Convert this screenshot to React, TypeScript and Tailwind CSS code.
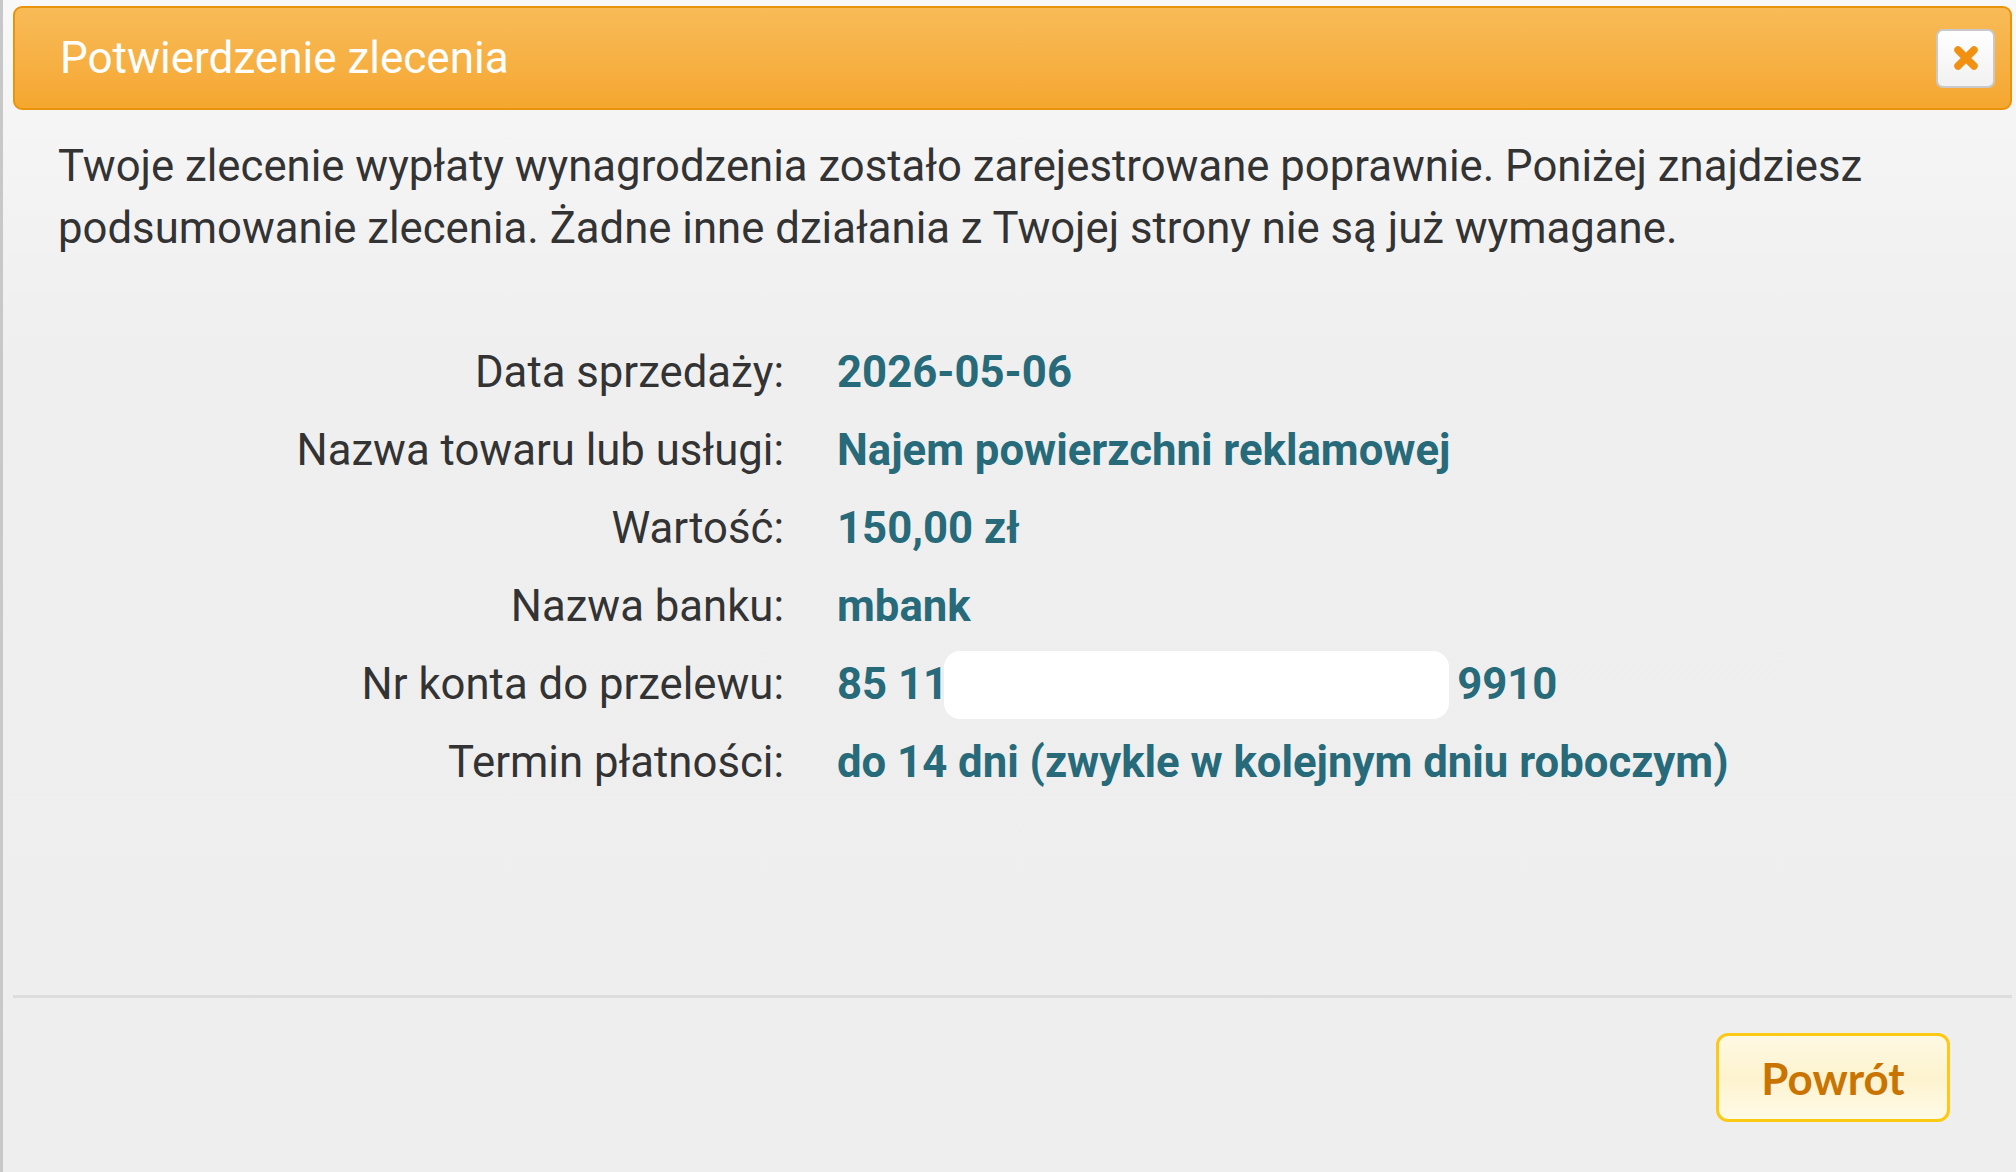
import React from "react";

const rows: [string, string][] = [
  ["Data sprzedaży:", "2026-05-06"],
  ["Nazwa towaru lub usługi:", "Najem powierzchni reklamowej"],
  ["Wartość:", "150,00 zł"],
  ["Nazwa banku:", "mbank"],
  ["Nr konta do przelewu:", "ACCOUNT"],
  ["Termin płatności:", "do 14 dni (zwykle w kolejnym dniu roboczym)"],
];

export default function App() {
  return (
    <div
      className="w-[2016px] h-[1172px] flex flex-col border-l-[3px] border-[#c8c8c8] bg-gradient-to-b from-[#f8f8f8] via-[#efefef] via-30% to-[#eeeeee] overflow-hidden"
      style={{ fontFamily: "Roboto, 'Noto Sans', sans-serif" }}
    >
      <div className="ml-[10px] mr-[4px] mt-[6px] h-[104px] shrink-0 rounded-[9px] border-2 border-[#ea940c] bg-gradient-to-b from-[#f8bb57] to-[#f5a72f] flex items-center justify-between pl-[45px] pr-[15px]">
        <span className="text-white text-[44px] leading-none">Potwierdzenie zlecenia</span>
        <button className="w-[59px] h-[59px] rounded-[7px] border-2 border-[#c9c9c9] bg-gradient-to-b from-[#ffffff] to-[#f1f1f1] flex items-center justify-center">
          <svg width="30" height="30" viewBox="0 0 30 30">
            <path d="M7 7 L23 23 M23 7 L7 23" stroke="#f29111" strokeWidth="7.5" strokeLinecap="round" />
          </svg>
        </button>
      </div>

      <p className="mt-[25px] pl-[55px] pr-[60px] text-[43.7px] leading-[62px] text-[#333333]">
        Twoje zlecenie wypłaty wynagrodzenia zostało zarejestrowane poprawnie. Poniżej znajdziesz podsumowanie zlecenia. Żadne inne działania z Twojej strony nie są już wymagane.
      </p>

      <div className="mt-[75px] flex flex-col">
        {rows.map(([label, value]) => (
          <div key={label} className="h-[78px] flex items-center text-[43.7px]">
            <div className="w-[781px] text-right text-[#333333]">{label}</div>
            <div className="ml-[53px] font-bold text-[#276a7a]">
              {value === "ACCOUNT" ? (
                <span className="flex items-center">
                  <span>85 11</span>
                  <span className="inline-block w-[505px] h-[68px] bg-white rounded-[16px] -ml-[4px] mr-[8px]" />
                  <span>9910</span>
                </span>
              ) : (
                value
              )}
            </div>
          </div>
        ))}
      </div>

      <div className="mt-[193px] ml-[10px] mr-[4px] h-[3px] bg-[#dddddd]" />

      <div className="flex justify-end pr-[66px] mt-[35px]">
        <button className="w-[234px] h-[89px] rounded-[12px] border-[3px] border-[#fcc914] bg-gradient-to-b from-[#fef9e4] via-[#fdf3cf] to-[#fefae6] text-[#c97400] font-bold text-[44px] flex items-center justify-center" style={{ fontFamily: "Lato, 'Open Sans', sans-serif" }}>
          Powrót
        </button>
      </div>
    </div>
  );
}
